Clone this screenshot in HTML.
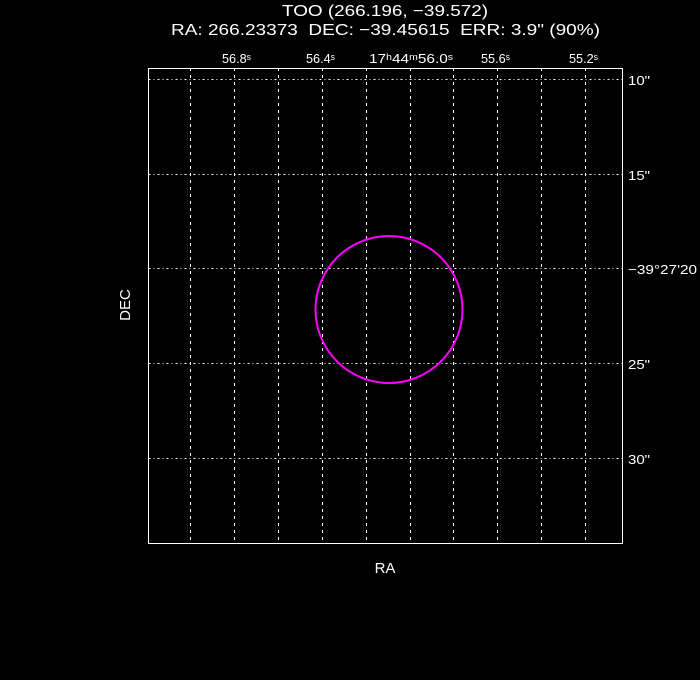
<!DOCTYPE html>
<html><head><style>body{margin:0;background:#000}svg{display:block}</style></head><body>
<svg width="700" height="680" xmlns="http://www.w3.org/2000/svg" font-family="Liberation Sans, sans-serif" fill="#fff">
<rect width="700" height="680" fill="#000"/>
<text x="282" y="16" font-size="16" textLength="206" lengthAdjust="spacingAndGlyphs">TOO (266.196, −39.572)</text>
<text x="171" y="35" font-size="16" textLength="429" lengthAdjust="spacingAndGlyphs" xml:space="preserve">RA: 266.23373  DEC: −39.45615  ERR: 3.9" (90%)</text>
<g stroke="#fff" stroke-width="1" stroke-dasharray="2,3,1,3" fill="none">
<path d="M148.5 79.5H622M148.5 174.5H622M148.5 268.5H622M148.5 363.5H622M148.5 458.5H622"/>
<path d="M190.5 68V543M234.5 68V543M278.5 68V543M322.5 68V543M366.5 68V543M410.5 68V543M453.5 68V543M497.5 68V543M541.5 68V543M585.5 68V543" stroke-dasharray="3,4"/>
</g>
<rect x="148.5" y="68.5" width="474" height="475" fill="none" stroke="#fff"/>
<g font-size="13">
<text x="222" y="63" textLength="29" lengthAdjust="spacingAndGlyphs">56.8ˢ</text>
<text x="306" y="63" textLength="29" lengthAdjust="spacingAndGlyphs">56.4ˢ</text>
<text x="369" y="63" textLength="84" lengthAdjust="spacingAndGlyphs">17ʰ44ᵐ56.0ˢ</text>
<text x="481" y="63" textLength="29" lengthAdjust="spacingAndGlyphs">55.6ˢ</text>
<text x="569" y="63" textLength="29" lengthAdjust="spacingAndGlyphs">55.2ˢ</text>
</g>
<g font-size="13">
<text x="628" y="85" textLength="22" lengthAdjust="spacingAndGlyphs">10"</text>
<text x="628" y="180" textLength="22" lengthAdjust="spacingAndGlyphs">15"</text>
<text x="628" y="274" textLength="69" lengthAdjust="spacingAndGlyphs">−39°27'20</text>
<text x="628" y="369" textLength="22" lengthAdjust="spacingAndGlyphs">25"</text>
<text x="628" y="464" textLength="22" lengthAdjust="spacingAndGlyphs">30"</text>
</g>
<text x="385" y="573" font-size="15" text-anchor="middle">RA</text>
<text transform="translate(130,305) rotate(-90)" font-size="15" text-anchor="middle">DEC</text>
<circle cx="389" cy="309.5" r="73.5" fill="none" stroke="#ff00ff" stroke-width="2"/>
</svg>
</body></html>
